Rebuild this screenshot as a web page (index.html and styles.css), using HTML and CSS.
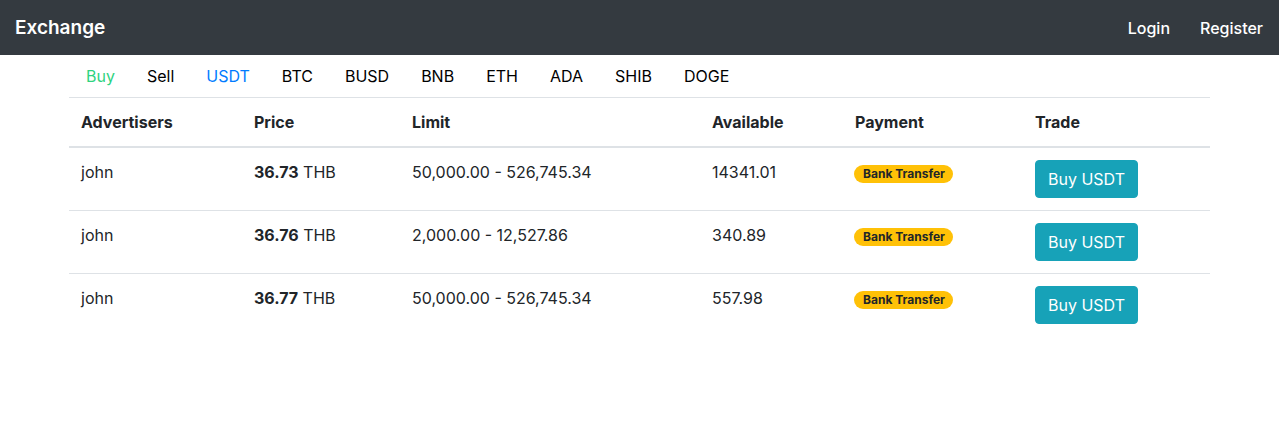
FILE: index.html
```html
<!DOCTYPE html>
<html lang="en">
<head>
<meta charset="utf-8">
<title>Exchange</title>
<link rel="stylesheet" href="styles.css">
</head>
<body>
<header class="navbar">
  <a class="brand" href="#">Exchange</a>
  <nav class="nav-right">
    <a href="#">Login</a>
    <a href="#">Register</a>
  </nav>
</header>
<main class="container">
  <ul class="tabs">
    <li><a class="buy" href="#">Buy</a></li>
    <li><a href="#">Sell</a></li>
    <li><a class="active" href="#">USDT</a></li>
    <li><a href="#">BTC</a></li>
    <li><a href="#">BUSD</a></li>
    <li><a href="#">BNB</a></li>
    <li><a href="#">ETH</a></li>
    <li><a href="#">ADA</a></li>
    <li><a href="#">SHIB</a></li>
    <li><a href="#">DOGE</a></li>
  </ul>
  <table class="table">
    <colgroup>
      <col class="c1"><col class="c2"><col class="c3"><col class="c4"><col class="c5"><col class="c6">
    </colgroup>
    <thead>
      <tr><th>Advertisers</th><th>Price</th><th>Limit</th><th>Available</th><th>Payment</th><th>Trade</th></tr>
    </thead>
    <tbody>
      <tr>
        <td>john</td>
        <td><b>36.73</b> THB</td>
        <td>50,000.00 - 526,745.34</td>
        <td>14341.01</td>
        <td><span class="badge">Bank Transfer</span></td>
        <td><button class="btn">Buy USDT</button></td>
      </tr>
      <tr>
        <td>john</td>
        <td><b>36.76</b> THB</td>
        <td>2,000.00 - 12,527.86</td>
        <td>340.89</td>
        <td><span class="badge">Bank Transfer</span></td>
        <td><button class="btn">Buy USDT</button></td>
      </tr>
      <tr>
        <td>john</td>
        <td><b>36.77</b> THB</td>
        <td>50,000.00 - 526,745.34</td>
        <td>557.98</td>
        <td><span class="badge">Bank Transfer</span></td>
        <td><button class="btn">Buy USDT</button></td>
      </tr>
    </tbody>
  </table>
</main>
</body>
</html>
```
FILE: styles.css
```css
* { box-sizing: border-box; }
body {
  margin: 0;
  font-family: Inter, "Liberation Sans", Arial, sans-serif;
  font-size: 16px;
  line-height: 24px;
  color: #212529;
  background: #fff;
}
a { text-decoration: none; }
.navbar {
  height: 55px;
  background: #343a40;
  display: flex;
  align-items: center;
  justify-content: space-between;
  padding: 0 16px 0 15px;
}
.brand {
  color: #fff;
  font-size: 19px;
  font-weight: 600;
  line-height: 30px;
}
.nav-right { display: flex; gap: 30px; }
.nav-right a { color: #fff; font-size: 16px; font-weight: 500; }
.container {
  width: 1141px;
  margin: 0 auto;
}
.tabs {
  list-style: none;
  margin: 0;
  padding: 1px 0 0;
  display: flex;
  height: 42px;
}
.tabs a {
  display: block;
  padding: 8px 16px 8px 17px;
  margin-right: -1px;
  color: #000;
}
.tabs a.buy { color: #2fd37f; }
.tabs a.active { color: #007bff; }
.table {
  width: 100%;
  border-collapse: collapse;
  table-layout: fixed;
}
.c1 { width: 173px; }
.c2 { width: 158px; }
.c3 { width: 300px; }
.c4 { width: 143px; }
.c5 { width: 180px; }
.c6 { width: 187px; }
.table th, .table td {
  padding: 12px;
  text-align: left;
  vertical-align: top;
  border-top: 1px solid #dee2e6;
}
.table th { font-weight: 700; }
.table thead th { border-bottom: 2px solid #dee2e6; }
.table tbody tr:first-child td { border-top: 0; }
.badge {
  display: inline-block;
  background: #ffc107;
  color: #212529;
  font-size: 12px;
  font-weight: 700;
  line-height: 1;
  padding: 3px 8px 3px 9px;
  margin-left: -1px;
  border-radius: 10px;
  vertical-align: 0;
}
.btn {
  font-family: inherit;
  font-size: 16px;
  line-height: 24px;
  color: #fff;
  background: #17a2b8;
  border: 1px solid #17a2b8;
  border-radius: 4px;
  padding: 6px 12px;
  cursor: pointer;
}
```
